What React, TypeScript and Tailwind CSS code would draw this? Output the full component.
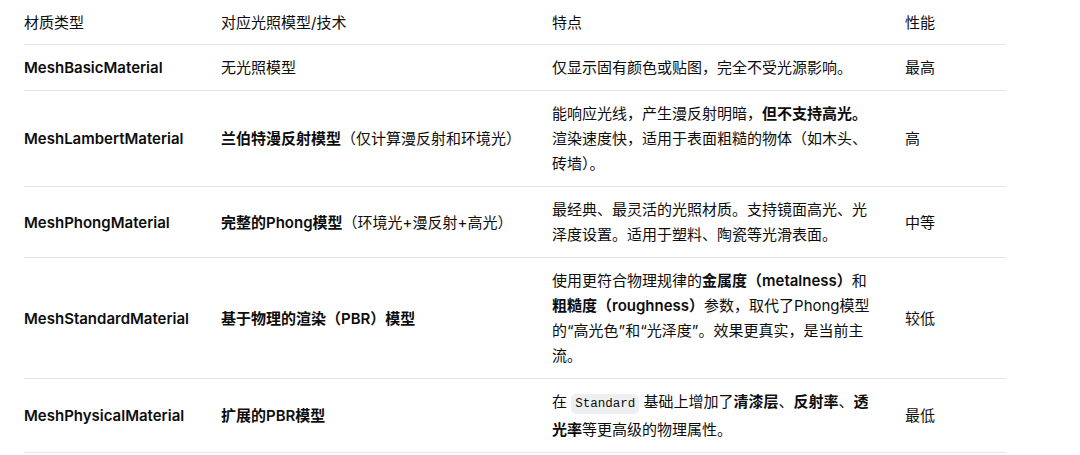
import React from 'react';

const font = { fontFamily: "Inter, 'Noto Sans CJK SC', sans-serif" };

const Code = ({ children }: { children: React.ReactNode }) => (
  <code className="font-['Liberation_Mono',monospace] text-[12.5px] bg-[#eeeff1] rounded-[5px] px-[4px] py-[3px]">
    {children}
  </code>
);

const rows = [
  {
    name: 'MeshBasicMaterial',
    model: <>无光照模型</>,
    feature: <>仅显示固有颜色或贴图，完全不受光源影响。</>,
    perf: '最高',
  },
  {
    name: 'MeshLambertMaterial',
    model: (
      <>
        <strong className="font-semibold">兰伯特漫反射模型</strong>（仅计算漫反射和环境光）
      </>
    ),
    feature: (
      <>
        能响应光线，产生漫反射明暗，<strong className="font-semibold">但不支持高光。</strong>
        渲染速度快，适用于表面粗糙的物体（如木头、砖墙）。
      </>
    ),
    perf: '高',
  },
  {
    name: 'MeshPhongMaterial',
    model: (
      <>
        <strong className="font-semibold">完整的Phong模型</strong>（环境光+漫反射+高光）
      </>
    ),
    feature: <>最经典、最灵活的光照材质。支持镜面高光、光泽度设置。适用于塑料、陶瓷等光滑表面。</>,
    perf: '中等',
  },
  {
    name: 'MeshStandardMaterial',
    model: <strong className="font-semibold">基于物理的渲染（PBR）模型</strong>,
    feature: (
      <>
        使用更符合物理规律的<strong className="font-semibold">金属度（metalness）</strong>和
        <strong className="font-semibold">粗糙度（roughness）</strong>参数，取代了Phong模型的“高光色”和“光泽度”。效果更真实，是当前主流。
      </>
    ),
    perf: '较低',
  },
  {
    name: 'MeshPhysicalMaterial',
    model: <strong className="font-semibold">扩展的PBR模型</strong>,
    feature: (
      <>
        在 <Code>Standard</Code> 基础上增加了<strong className="font-semibold">清漆层</strong>、
        <strong className="font-semibold">反射率</strong>、<strong className="font-semibold">透光率</strong>
        等更高级的物理属性。
      </>
    ),
    perf: '最低',
  },
];

export default function App() {
  return (
    <div className="w-[1080px] h-[455px] bg-white overflow-hidden text-[#0d0d0d]" style={font}>
      <table className="ml-[24px] w-[982px] table-fixed border-collapse text-[15px] leading-[25px]">
        <colgroup>
          <col className="w-[181px]" />
          <col className="w-[331px]" />
          <col className="w-[353px]" />
          <col className="w-[117px]" />
        </colgroup>
        <thead>
          <tr className="border-b border-[#e3e3e3]">
            <th className="text-left font-normal pr-4 pt-[10px] pb-[9px]">材质类型</th>
            <th className="text-left font-normal px-4 pt-[10px] pb-[9px]">对应光照模型/技术</th>
            <th className="text-left font-normal px-4 pt-[10px] pb-[9px]">特点</th>
            <th className="text-left font-normal px-4 pt-[10px] pb-[9px]">性能</th>
          </tr>
        </thead>
        <tbody>
          {rows.map((r) => (
            <tr key={r.name} className="border-b border-[#e3e3e3]">
              <td className="pr-4 py-[10px] align-middle font-semibold">{r.name}</td>
              <td className="px-4 py-[10px] align-middle whitespace-nowrap">{r.model}</td>
              <td className="px-4 py-[10px] align-middle">{r.feature}</td>
              <td className="px-4 py-[10px] align-middle">{r.perf}</td>
            </tr>
          ))}
        </tbody>
      </table>
    </div>
  );
}
